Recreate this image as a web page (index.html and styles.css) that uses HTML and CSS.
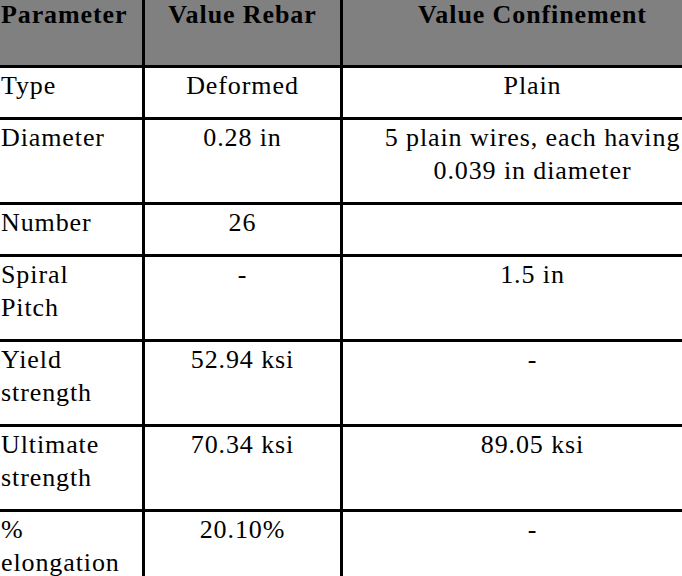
FILE: index.html
```html
<!DOCTYPE html>
<html>
<head>
<meta charset="utf-8">
<link rel="stylesheet" href="styles.css">
</head>
<body>
<table class="grid">
  <thead>
    <tr>
      <th class="c1">Parameter</th>
      <th class="c2">Value Rebar</th>
      <th class="c3">Value Confinement</th>
    </tr>
  </thead>
  <tbody>
    <tr><td class="c1">Type</td><td class="c2">Deformed</td><td class="c3">Plain</td></tr>
    <tr><td class="c1">Diameter</td><td class="c2">0.28 in</td><td class="c3">5 plain wires, each having<br>0.039 in diameter</td></tr>
    <tr><td class="c1">Number</td><td class="c2">26</td><td class="c3"></td></tr>
    <tr><td class="c1">Spiral<br>Pitch</td><td class="c2">-</td><td class="c3">1.5 in</td></tr>
    <tr><td class="c1">Yield<br>strength</td><td class="c2">52.94 ksi</td><td class="c3">-</td></tr>
    <tr><td class="c1">Ultimate<br>strength</td><td class="c2">70.34 ksi</td><td class="c3">89.05 ksi</td></tr>
    <tr><td class="c1">%<br>elongation</td><td class="c2">20.10%</td><td class="c3">-</td></tr>
  </tbody>
</table>
</body>
</html>
```
FILE: styles.css
```css
html, body {
  margin: 0;
  padding: 0;
  background: #ffffff;
  overflow: hidden;
}
body {
  width: 682px;
  height: 576px;
  font-family: "Liberation Serif", "Times New Roman", Times, serif;
}
.grid {
  border-collapse: separate;
  border-spacing: 0;
  table-layout: fixed;
  width: 725px;
  color: #000;
}
.grid th,
.grid td {
  box-sizing: border-box;
  font-family: "Liberation Serif", "Times New Roman", Times, serif;
  font-size: 26px;
  letter-spacing: 0.9px;
  border-right: 3px solid #000;
  border-bottom: 3px solid #000;
  vertical-align: top;
  padding: 1px 1px 15px 1px;
  line-height: 33px;
  white-space: nowrap;
}
.grid th {
  background: #808080;
  font-weight: bold;
  line-height: 30px;
  padding: 0 1px;
  height: 68px;
}
.c1 { width: 145px; text-align: left; }
.c2 { width: 198px; text-align: center; }
.c3 { width: 382px; text-align: center; }
```
